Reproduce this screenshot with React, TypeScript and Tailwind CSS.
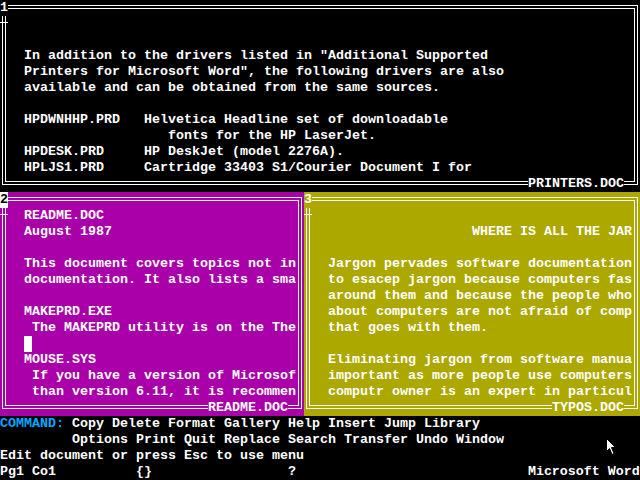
import React from "react";

// double-line box drawing pieces, 8x16 text cells
function HLine({ className = "" }: { className?: string }) {
  return <div className={`h-[4px] mt-[5px] border-y border-white ${className}`} />;
}

function CornerTR() {
  return (
    <div className="w-[8px] h-[16px] shrink-0">
      <div className="mt-[5px] w-[6px] h-[11px] border-t border-r border-white">
        <div className="mt-[2px] w-[3px] h-[8px] border-t border-r border-white" />
      </div>
    </div>
  );
}

function CornerBR() {
  return (
    <div className="w-[8px] h-[16px] shrink-0">
      <div className="w-[6px] h-[9px] border-b border-r border-white">
        <div className="w-[3px] h-[6px] border-b border-r border-white" />
      </div>
    </div>
  );
}

function CornerBL() {
  return (
    <div className="w-[8px] h-[16px] shrink-0">
      <div className="ml-[2px] w-[6px] h-[9px] border-b border-l border-white">
        <div className="ml-[2px] w-[3px] h-[6px] border-b border-l border-white" />
      </div>
    </div>
  );
}

function LeftBorder() {
  return (
    <div className="w-[8px] shrink-0 flex flex-col">
      <div className="h-[16px] flex flex-col">
        <div className="h-[6px] w-[4px] ml-[2px] border-x border-white" />
        <div className="h-[1px] w-[8px] bg-white" />
        <div className="flex-1 w-[4px] ml-[2px] border-x border-white" />
      </div>
      <div className="flex-1 w-[4px] ml-[2px] border-x border-white" />
    </div>
  );
}

function RightBorder() {
  return (
    <div className="w-[8px] shrink-0 flex">
      <div className="w-[4px] ml-[2px] border-x border-white" />
    </div>
  );
}

type WinProps = {
  num: string;
  active?: boolean;
  title: string;
  className: string;
  lines: React.ReactNode[];
};

function Win({ num, active, title, className, lines }: WinProps) {
  return (
    <div className={`flex flex-col shrink-0 ${className}`}>
      <div className="flex h-[16px]">
        <span
          className={`w-[8px] h-[16px] leading-[16px] shrink-0 ${
            active ? "bg-white text-black" : ""
          }`}
        >
          {num}
        </span>
        <HLine className="flex-1" />
        <CornerTR />
      </div>
      <div className="flex flex-1 min-h-0">
        <LeftBorder />
        <div className="flex-1 overflow-hidden">
          {lines.map((l, i) => (
            <div key={i} className="h-[16px] leading-[16px] whitespace-pre pl-[16px]">
              {l}
            </div>
          ))}
        </div>
        <RightBorder />
      </div>
      <div className="flex h-[16px]">
        <CornerBL />
        <HLine className="flex-1" />
        <span className="h-[16px] leading-[16px] whitespace-pre shrink-0">{title}</span>
        <HLine className="w-[8px] shrink-0" />
        <CornerBR />
      </div>
    </div>
  );
}

const printersLines = [
  "",
  "",
  'In addition to the drivers listed in "Additional Supported',
  'Printers for Microsoft Word", the following drivers are also',
  "available and can be obtained from the same sources.",
  "",
  "HPDWNHHP.PRD   Helvetica Headline set of downloadable",
  "                  fonts for the HP LaserJet.",
  "HPDESK.PRD     HP DeskJet (model 2276A).",
  "HPLJS1.PRD     Cartridge 33403 S1/Courier Document I for",
];

// window text is cut at the right border, as on screen
const readmeLines: React.ReactNode[] = [
  "README.DOC",
  "August 1987",
  "",
  "This document covers topics not in",
  "documentation. It also lists a sma",
  "",
  "MAKEPRD.EXE",
  " The MAKEPRD utility is on the The",
  <span className="inline-block w-[8px] h-[16px] bg-white align-top" />,
  "MOUSE.SYS",
  " If you have a version of Microsof",
  " than version 6.11, it is recommen",
];

const typosLines = [
  "",
  "                  WHERE IS ALL THE JAR",
  "",
  "Jargon pervades software documentation",
  "to esacep jargon because computers fas",
  "around them and because the people who",
  "about computers are not afraid of comp",
  "that goes with them.",
  "",
  "Eliminating jargon from software manua",
  "important as more people use computers",
  "computr owner is an expert in particul",
];

function Pointer() {
  return (
    <svg
      className="absolute left-[606px] top-[438px]"
      width="12"
      height="18"
      viewBox="0 0 12 18"
    >
      <path
        d="M0.5 0.5 L0.5 13.5 L3.5 10.5 L6 16.5 L8 15.5 L5.5 9.5 L9.5 9.5 Z"
        fill="#ffffff"
        stroke="#000000"
        strokeWidth="1"
      />
    </svg>
  );
}

export default function App() {
  const status =
    "Pg1 Co1".padEnd(17, " ") + "{}".padEnd(19, " ") + "?".padEnd(30, " ") + "Microsoft Word";

  return (
    <div className="relative w-[640px] h-[480px] overflow-hidden bg-black text-white font-['Liberation_Mono',monospace] font-bold text-[13.333px] leading-[16px]">
      <Win num="1" title="PRINTERS.DOC" className="w-[640px] h-[192px] bg-black" lines={printersLines} />
      <div className="flex h-[224px]">
        <Win num="2" active title="README.DOC" className="w-[304px] h-[224px] bg-[#aa00aa]" lines={readmeLines} />
        <Win num="3" title="TYPOS.DOC" className="w-[336px] h-[224px] bg-[#aca800]" lines={typosLines} />
      </div>
      <div className="flex flex-col">
        <div className="h-[16px] whitespace-pre">
          <span className="text-[#00a8ff]">COMMAND:</span> Copy Delete Format Gallery Help Insert Jump Library
        </div>
        <div className="h-[16px] whitespace-pre">{"         Options Print Quit Replace Search Transfer Undo Window"}</div>
        <div className="h-[16px] whitespace-pre">Edit document or press Esc to use menu</div>
        <div className="h-[16px] whitespace-pre">{status}</div>
      </div>
      <Pointer />
    </div>
  );
}
